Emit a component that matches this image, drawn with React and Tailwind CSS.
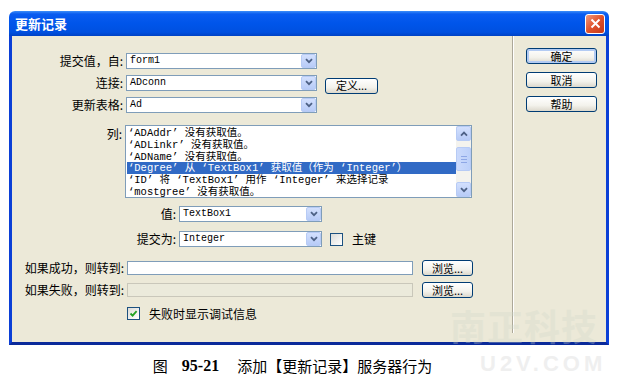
import React from "react";

const CJK = "font-[family-name:'Noto_Sans_CJK_SC','Noto_Sans',sans-serif]";
const MONO = "font-[family-name:'Liberation_Mono','Noto_Sans_CJK_SC',monospace]";

function Arrow() {
  return (
    <div className="flex h-full w-[15px] items-center justify-center rounded-[2px] border border-[#b7cbf5] bg-[linear-gradient(to_bottom,#d3e0fd,#b7cbf7)]">
      <svg width="8" height="6" viewBox="0 0 8 6">
        <path d="M1 1.2 L4 4.2 L7 1.2" fill="none" stroke="#4d6185" strokeWidth="1.8" />
      </svg>
    </div>
  );
}

function Select({ w, value }) {
  return (
    <div className={`flex h-[16px] items-stretch border border-[#7f9db9] bg-white ${w}`}>
      <div className={`flex-1 pl-[3px] text-[10px] leading-[14px] text-black ${MONO}`}>{value}</div>
      <Arrow />
    </div>
  );
}

function Btn({ children, w, extra = "" }) {
  return (
    <div
      className={`flex h-[16px] items-center justify-center rounded-[3px] border border-[#003c74] bg-[linear-gradient(to_bottom,#ffffff,#f3f2ec_60%,#dcd8cc)] text-[11px] leading-none text-black ${w} ${extra}`}
    >
      {children}
    </div>
  );
}

function Label({ children, w }) {
  return <div className={`shrink-0 pr-[3px] text-right text-[12px] leading-none text-black ${w}`}>{children}</div>;
}

function Checkbox({ checked }) {
  return (
    <div className="flex h-[13px] w-[13px] items-center justify-center border border-[#1c5180] bg-[linear-gradient(135deg,#dcdcd7,#ffffff)]">
      {checked && (
        <svg width="9" height="9" viewBox="0 0 9 9">
          <path d="M1.5 4.5 L3.6 6.6 L7.6 2.2" fill="none" stroke="#21a121" strokeWidth="1.8" />
        </svg>
      )}
    </div>
  );
}

const rows = [
  "‘ADAddr’ 没有获取值。",
  "‘ADLinkr’ 没有获取值。",
  "‘ADName’ 没有获取值。",
  "‘Degree’ 从 ‘TextBox1’ 获取值（作为 ‘Integer’）",
  "‘ID’ 将 ‘TextBox1’ 用作 ‘Integer’ 来选择记录",
  "‘mostgree’ 没有获取值。",
];

export default function App() {
  return (
    <div className={`relative h-[382px] w-[620px] overflow-hidden bg-white ${CJK}`}>
      <div className="pt-[11px] pl-[9px]">
        <div className="w-[600px]">
          {/* Title bar */}
          <div className="flex h-[25px] items-center justify-between rounded-t-[6px] bg-[linear-gradient(to_bottom,#3d8ef8_0%,#0a5cf0_12%,#0055ea_50%,#0050e0_85%,#0042c4_100%)] pl-[6px] pr-[4px]">
            <span className="text-[13px] font-bold leading-none text-white">更新记录</span>
            <div className="flex h-[20px] w-[20px] items-center justify-center rounded-[3px] border border-white bg-[linear-gradient(135deg,#f09a7e,#e0522c_50%,#c4391a)]">
              <svg width="11" height="11" viewBox="0 0 11 11">
                <path d="M1.5 1.5 L9.5 9.5 M9.5 1.5 L1.5 9.5" stroke="white" strokeWidth="2" />
              </svg>
            </div>
          </div>
          {/* Body */}
          <div className="flex h-[309px] border-x-[3px] border-b-[3px] border-x-[#0b3fd6] border-b-[#0a2a9a] bg-[#ece9d8]">
            {/* Form area */}
            <div className="w-[500px] shrink-0 pt-[17px]">
              <div className="flex h-[16px] items-center">
                <Label w="w-[114px]">提交值，自:</Label>
                <Select w="w-[191px]" value="form1" />
              </div>
              <div className="mt-[6px] flex h-[16px] items-center">
                <Label w="w-[114px]">连接:</Label>
                <Select w="w-[191px]" value="ADconn" />
                <Btn w="w-[53px]" extra="ml-[8px] mt-[5px]">定义...</Btn>
              </div>
              <div className="mt-[6px] flex h-[16px] items-center">
                <Label w="w-[114px]">更新表格:</Label>
                <Select w="w-[191px]" value="Ad" />
              </div>
              <div className="mt-[12px] flex items-start">
                <Label w="w-[113px] pt-[3px]">列:</Label>
                <div className="flex h-[73px] w-[347px] border border-[#7f9db9] bg-white">
                  <div className={`flex-1 pl-[1px] pt-[1px] text-[10.5px] text-black ${MONO}`}>
                    {rows.map((r, i) => (
                      <div
                        key={i}
                        className={`h-[11.8px] whitespace-nowrap pl-[1px] leading-[12px] ${i === 3 ? "bg-[#316ac5] text-white" : ""}`}
                      >
                        {r}
                      </div>
                    ))}
                  </div>
                  <div className="flex w-[15px] flex-col bg-[#f4f3ee]">
                    <div className="flex h-[15px] items-center justify-center rounded-[2px] border border-[#b7cbf5] bg-[linear-gradient(to_bottom,#d3e0fd,#b7cbf7)]">
                      <svg width="8" height="6" viewBox="0 0 8 6">
                        <path d="M1 4.6 L4 1.6 L7 4.6" fill="none" stroke="#4d6185" strokeWidth="1.8" />
                      </svg>
                    </div>
                    <div className="mt-[6px] flex h-[24px] flex-col items-center justify-center gap-[2px] rounded-[2px] border border-[#b7cbf5] bg-[linear-gradient(to_right,#cbdafc,#bcd0fa)]">
                      <div className="h-[1px] w-[6px] bg-[#8ea7e6]" />
                      <div className="h-[1px] w-[6px] bg-[#8ea7e6]" />
                      <div className="h-[1px] w-[6px] bg-[#8ea7e6]" />
                    </div>
                    <div className="flex-1" />
                    <div className="flex h-[15px] items-center justify-center rounded-[2px] border border-[#b7cbf5] bg-[linear-gradient(to_bottom,#d3e0fd,#b7cbf7)]">
                      <svg width="8" height="6" viewBox="0 0 8 6">
                        <path d="M1 1.2 L4 4.2 L7 1.2" fill="none" stroke="#4d6185" strokeWidth="1.8" />
                      </svg>
                    </div>
                  </div>
                </div>
              </div>
              <div className="mt-[8px] flex h-[16px] items-center">
                <Label w="w-[167px]">值:</Label>
                <Select w="w-[143px]" value="TextBox1" />
              </div>
              <div className="mt-[9px] flex h-[16px] items-center">
                <Label w="w-[167px]">提交为:</Label>
                <Select w="w-[143px]" value="Integer" />
                <div className="ml-[8px]">
                  <Checkbox />
                </div>
                <span className="ml-[9px] text-[12px] leading-none text-black">主键</span>
              </div>
              <div className="mt-[13px] flex h-[16px] items-center">
                <Label w="w-[115px]">如果成功，则转到:</Label>
                <div className="h-[14px] w-[286px] border border-[#7f9db9] bg-white" />
                <Btn w="w-[51px]" extra="ml-[9px]">浏览...</Btn>
              </div>
              <div className="mt-[6px] flex h-[16px] items-center">
                <Label w="w-[115px]">如果失败，则转到:</Label>
                <div className="h-[14px] w-[286px] border border-[#c9c7ba] bg-[#ebeadb]" />
                <Btn w="w-[51px]" extra="ml-[9px]">浏览...</Btn>
              </div>
              <div className="mt-[9px] flex h-[13px] items-center pl-[115px]">
                <Checkbox checked />
                <span className="ml-[9px] text-[12px] leading-none text-black">失败时显示调试信息</span>
              </div>
            </div>
            {/* Separator */}
            <div className="mb-[9px] w-[1px] bg-[#aca899] shadow-[1px_0_0_#ffffff]" />
            {/* Buttons */}
            <div className="flex flex-col gap-[8px] pl-[13px] pt-[12px]">
              <Btn w="w-[71px]" extra="shadow-[inset_0_0_0_2px_#b3cbf3]">确定</Btn>
              <Btn w="w-[71px]">取消</Btn>
              <Btn w="w-[71px]">帮助</Btn>
            </div>
          </div>
        </div>
      </div>
      {/* Caption */}
      <div className="mt-[12px] flex justify-center pr-[35px] text-[15px] leading-[18px] text-black">
        <span>图</span>
        <span className="ml-[14px] font-[family-name:'Liberation_Serif',serif] text-[16px] font-bold">95-21</span>
        <span className="ml-[18px]">添加【更新记录】服务器行为</span>
      </div>
      {/* Watermark */}
      <div className="pointer-events-none absolute left-[450px] top-[307px] text-[36px] font-bold leading-none tracking-[1px] text-[#cfd8c8] opacity-30">
        南正科技
      </div>
      <div className="pointer-events-none absolute left-[480px] top-[353px] font-[family-name:'Liberation_Sans',sans-serif] text-[22px] font-bold leading-none tracking-[4px] text-[#d8d8d8] opacity-40">
        U2V.COM
      </div>
    </div>
  );
}
